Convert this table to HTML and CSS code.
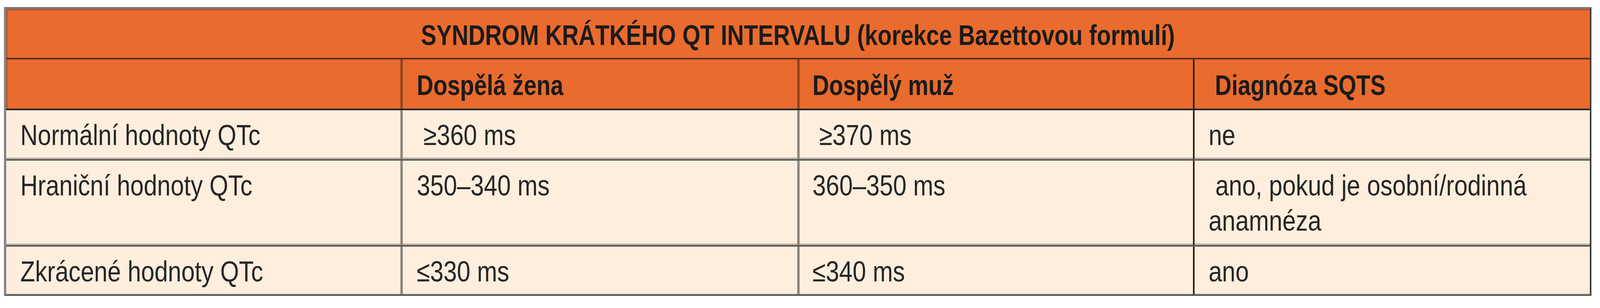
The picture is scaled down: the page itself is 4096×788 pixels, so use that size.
FILE: index.html
```html
<!DOCTYPE html>
<html lang="cs">
<head>
<meta charset="utf-8">
<title>Syndrom krátkého QT intervalu</title>
<link rel="stylesheet" href="styles.css">
</head>
<body>
<div class="page">
  <div class="table">
    <div class="title"><span class="title-text">SYNDROM KRÁTKÉHO QT INTERVALU (korekce Bazettovou formulí)</span></div>
    <div class="row head">
      <div class="cell"></div>
      <div class="cell"><div class="txt">Dospělá žena</div></div>
      <div class="cell"><div class="txt">Dospělý muž</div></div>
      <div class="cell"><div class="txt">&nbsp;Diagnóza SQTS</div></div>
    </div>
    <div class="row body r-normal">
      <div class="cell"><div class="txt">Normální hodnoty QTc</div></div>
      <div class="cell"><div class="txt">&nbsp;≥360 ms</div></div>
      <div class="cell"><div class="txt">&nbsp;≥370 ms</div></div>
      <div class="cell"><div class="txt">ne</div></div>
    </div>
    <div class="row body r-border">
      <div class="cell"><div class="txt">Hraniční hodnoty QTc</div></div>
      <div class="cell"><div class="txt">350–340 ms</div></div>
      <div class="cell"><div class="txt">360–350 ms</div></div>
      <div class="cell"><div class="txt">&nbsp;ano, pokud je osobní/rodinná anamnéza</div></div>
    </div>
    <div class="row body r-short">
      <div class="cell"><div class="txt">Zkrácené hodnoty QTc</div></div>
      <div class="cell"><div class="txt">≤330 ms</div></div>
      <div class="cell"><div class="txt">≤340 ms</div></div>
      <div class="cell"><div class="txt">ano</div></div>
    </div>
  </div>
</div>
</body>
</html>
```
FILE: styles.css
```css
* {
  box-sizing: border-box;
}

html,
body {
  margin: 0;
  padding: 0;
  background: #ffffff;
  overflow: hidden;
}

body {
  font-family: "Liberation Sans", Arial, sans-serif;
  color: #262626;
}

.page {
  padding: 18px 0 0 10px;
}

.table {
  width: 4064px;
  border-left: 6px solid #868686;
  border-top: 5px solid #7a7a7a;
  border-right: 4px solid #3c3c3c;
  border-bottom: 4px solid #5d5750;
  box-shadow: 0 4px 0 #cdc9c5;
}

.title {
  height: 125px;
  border-top: 3px solid #a9532b;
  background: #e96b2e;
  box-shadow: inset 3px 0 0 #a9532b;
  text-align: center;
  font-weight: 700;
  font-size: 72px;
  line-height: 88px;
  padding-top: 20px;
  color: #1b1b1b;
  white-space: nowrap;
}

.title-text {
  display: inline-block;
  transform: scaleX(0.82);
  transform-origin: 50% 0;
}

.row {
  display: grid;
  grid-template-columns: 1009px 1016px 1013px 1016px;
}

.cell {
  padding: 19px 20px 0 36px;
  font-size: 74px;
  line-height: 89.5px;
}

.txt {
  width: 119.76%;
  transform: scaleX(0.835);
  transform-origin: 0 0;
}

.cell + .cell {
  border-left: 6px solid #8a847e;
}

.cell:nth-child(3) {
  padding-left: 33px;
}

.cell:nth-child(4) {
  border-left: 4px solid #1e1e1e;
}

.head {
  height: 134px;
  background: #e96b2e;
  border-top: 4px solid #5c2c16;
  border-bottom: 4px solid #1f1f1f;
  box-shadow: inset 3px 0 0 #a9532b;
}

.head .cell {
  padding-top: 22px;
  font-weight: 700;
  font-size: 72px;
  line-height: 88px;
  color: #1b1b1b;
}

.head .txt {
  width: 122.7%;
  transform: scaleX(0.815);
}

.head .cell + .cell {
  border-left-color: #8b4522;
}

.head .cell:nth-child(4) {
  border-left-color: #2e1f16;
}

.body {
  background: #fdeedd;
}

.r-normal {
  height: 129px;
  border-bottom: 4px solid #5f5851;
  box-shadow: inset 0 -4px 0 #bdb4aa;
}

.r-border {
  height: 220px;
  border-bottom: 4px solid #5f5851;
  box-shadow: inset 0 -4px 0 #bdb4aa;
}

.r-short {
  height: 122px;
  box-shadow: inset 0 -2px 0 #c9c0b5;
}
```
